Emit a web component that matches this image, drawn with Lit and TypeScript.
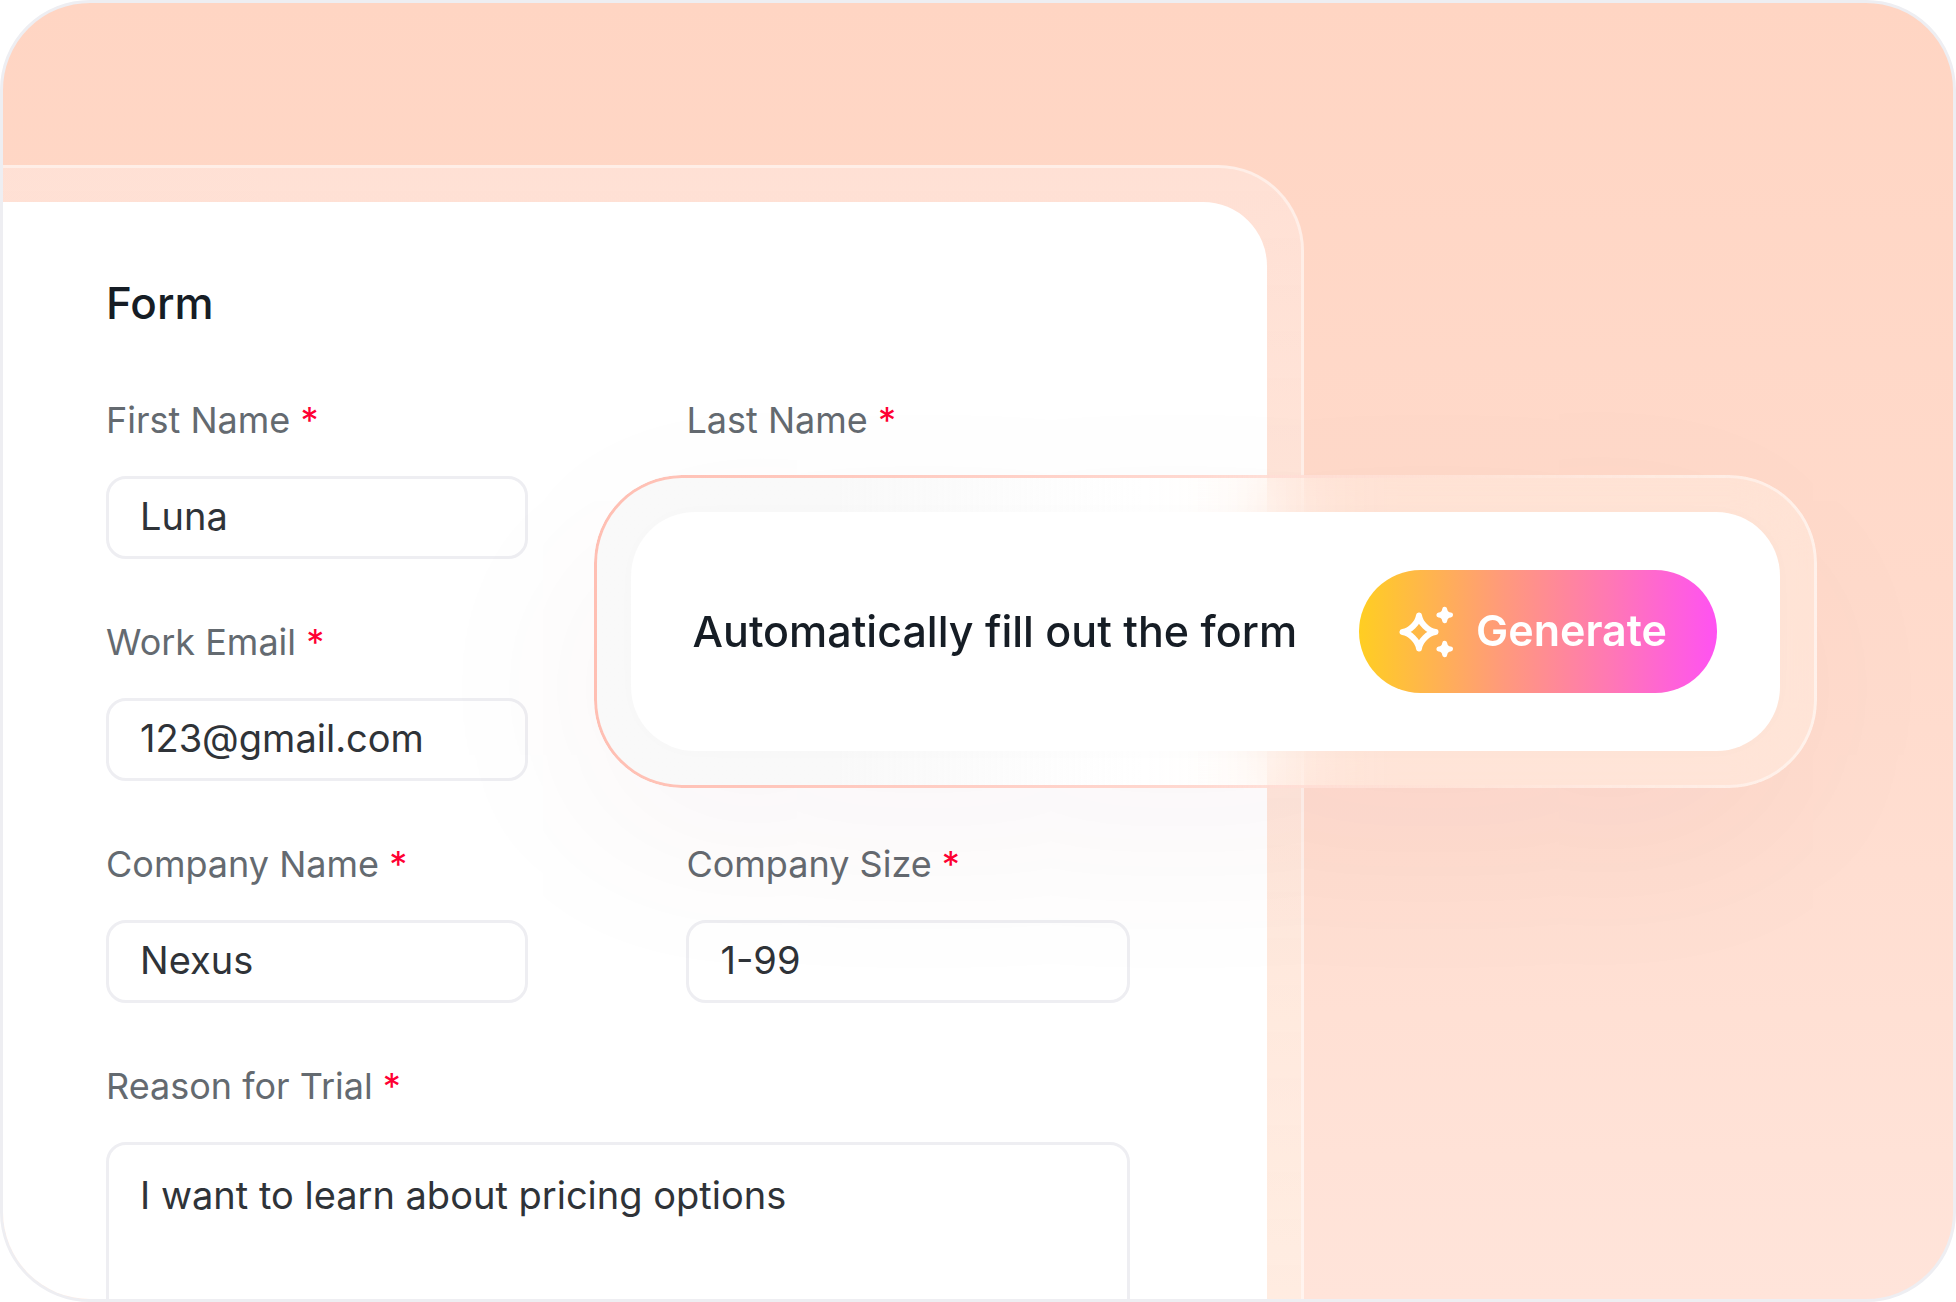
import { LitElement, html, css } from "lit";
import { customElement, property } from "lit/decorators.js";

const fieldStyles = css`
  *,
  *::before,
  *::after {
    box-sizing: border-box;
  }
  .field {
    display: flex;
    flex-direction: column;
    gap: 34px;
  }
  .label {
    font-size: 36px;
    line-height: 44px;
    color: #646a70;
    white-space: nowrap;
  }
  .required {
    color: #ff0033;
  }
  .control {
    display: block;
    width: 100%;
    height: 83px;
    margin: 0;
    padding: 0 31px 4px;
    border: 3px solid #eeeef2;
    border-radius: 20px;
    background: transparent;
    color: #2f3338;
    font-family: inherit;
    font-size: 38px;
    line-height: 46px;
    outline: none;
  }
  .area {
    height: 240px;
    padding: 27px 31px;
    resize: none;
  }
`;

@customElement("form-field")
export class FormField extends LitElement {
  static styles = [
    fieldStyles,
    css`
      :host {
        display: block;
        min-width: 0;
      }
      :host([quiet]) .control {
        border-color: transparent;
      }
    `,
  ];

  @property() label = "";
  @property() value = "";
  @property({ type: Boolean }) multiline = false;

  render() {
    return html`
      <div class="field">
        <label class="label" for="control"
          >${this.label} <span class="required">*</span></label
        >
        ${this.multiline
          ? html`<textarea class="control area" id="control" required .value=${this.value}></textarea>`
          : html`<input class="control" id="control" type="text" required .value=${this.value} />`}
      </div>
    `;
  }
}

@customElement("generate-bar")
export class GenerateBar extends LitElement {
  static styles = css`
    *,
    *::before,
    *::after {
      box-sizing: border-box;
    }
    :host {
      display: block;
    }
    .ring {
      position: relative;
      padding: 37px;
      border-radius: 88px;
      background: linear-gradient(
        to right,
        rgba(243, 243, 243, 0.5) 20%,
        rgba(255, 255, 255, 0.3) 45%,
        rgba(255, 241, 230, 0.4) 65%
      );
      backdrop-filter: blur(36px);
      box-shadow: -20px 56px 190px rgba(110, 20, 40, 0.045);
    }
    .ring::before {
      content: "";
      position: absolute;
      inset: 0;
      padding: 3px;
      border-radius: inherit;
      background: linear-gradient(
        to right,
        #ffbfb3,
        #ffd9d1 50%,
        rgba(255, 225, 215, 0.4) 70%,
        rgba(255, 255, 255, 0.5)
      );
      mask: linear-gradient(#000 0 0) content-box exclude, linear-gradient(#000 0 0);
      pointer-events: none;
    }
    .card {
      display: flex;
      align-items: center;
      gap: 62px;
      padding: 58px 63px 58px 62px;
      border-radius: 64px;
      background: #fff;
      box-shadow: 0 0 30px rgba(0, 0, 0, 0.01);
    }
    .text {
      margin: 0;
      padding-bottom: 2px;
      font-size: 43px;
      font-weight: 500;
      line-height: 52px;
      color: #161d25;
      white-space: nowrap;
    }
    .button {
      display: flex;
      align-items: center;
      gap: 23px;
      height: 123px;
      margin: 0;
      padding: 0 50px 0 40px;
      border: 0;
      border-radius: 62px;
      background: linear-gradient(to right, #ffce22, #ff9a7b 40%, #ff78b4 70%, #ff52f2);
      color: #fff;
      font-family: inherit;
      font-size: 43px;
      font-weight: 600;
      line-height: 52px;
      white-space: nowrap;
      cursor: pointer;
    }
    .caption {
      padding-bottom: 3px;
    }
    .icon {
      display: block;
      flex: none;
      width: 54px;
      height: 52px;
    }
  `;

  render() {
    return html`
      <div class="ring">
        <div class="card">
          <p class="text">Automatically fill out the form</p>
          <button class="button" type="button">
            <svg class="icon" viewBox="0 0 54 52" fill="none" stroke="#fff" stroke-linejoin="round" aria-hidden="true">
              <path
                stroke-width="6"
                d="M20 9.5C21 17 29 25 36.5 26C29 27 21 35 20 42.5C19 35 11 27 3.5 26C11 25 19 17 20 9.5Z"
              />
              <path
                fill="#fff"
                stroke-width="5"
                d="M45.7 3.3Q46.3 8.4 51.5 9Q46.3 9.6 45.7 14.7Q45.1 9.6 39.9 9Q45.1 8.4 45.7 3.3Z"
              />
              <path
                fill="#fff"
                stroke-width="5"
                d="M45.7 37.3Q46.3 42.4 51.5 43Q46.3 43.6 45.7 48.7Q45.1 43.6 39.9 43Q45.1 42.4 45.7 37.3Z"
              />
            </svg>
            <span class="caption">Generate</span>
          </button>
        </div>
      </div>
    `;
  }
}

@customElement("app-root")
export class AppRoot extends LitElement {
  static styles = css`
    *,
    *::before,
    *::after {
      box-sizing: border-box;
    }
    :host {
      display: block;
      background: #fff;
      font-family: Inter, "Liberation Sans", sans-serif;
    }
    .frame {
      position: relative;
      display: grid;
      grid-template-columns: minmax(0, 1301fr) minmax(0, 649fr);
      height: 100vh;
      padding-top: 162px;
      border: 3px solid #eeeef2;
      border-radius: 90px;
      overflow: hidden;
      background: linear-gradient(to bottom, #ffd5c3, #ffdacb 45%, #ffe4da);
    }
    .panel {
      padding: 34px 34px 0 0;
      border: 3px solid rgba(255, 255, 255, 0.58);
      border-width: 3px 3px 0 0;
      border-radius: 0 86px 0 0;
      background: linear-gradient(to bottom, rgba(255, 240, 236, 0.4), rgba(255, 245, 232, 0.5)) padding-box;
    }
    .form {
      height: 100%;
      padding: 75px 137px 0 103px;
      border-radius: 0 64px 0 0;
      background: #fff;
    }
    .title {
      margin: 0 0 69px;
      font-size: 44px;
      font-weight: 500;
      line-height: 52px;
      color: #161d25;
    }
    .fields {
      display: grid;
      grid-template-columns: minmax(0, 20fr) minmax(0, 21fr);
      gap: 61px 158px;
    }
    .start {
      grid-column: 1;
    }
    .wide {
      grid-column: 1 / -1;
    }
    .bar {
      position: absolute;
      top: 472px;
      right: 136px;
    }
  `;

  render() {
    return html`
      <main class="frame">
        <section class="panel">
          <form class="form">
            <h1 class="title">Form</h1>
            <div class="fields">
              <form-field label="First Name" value="Luna"></form-field>
              <form-field label="Last Name" quiet></form-field>
              <form-field class="start" label="Work Email" value="123@gmail.com"></form-field>
              <form-field class="start" label="Company Name" value="Nexus"></form-field>
              <form-field label="Company Size" value="1-99"></form-field>
              <form-field class="wide" label="Reason for Trial" value="I want to learn about pricing options" multiline></form-field>
            </div>
          </form>
        </section>
        <generate-bar class="bar"></generate-bar>
      </main>
    `;
  }
}
